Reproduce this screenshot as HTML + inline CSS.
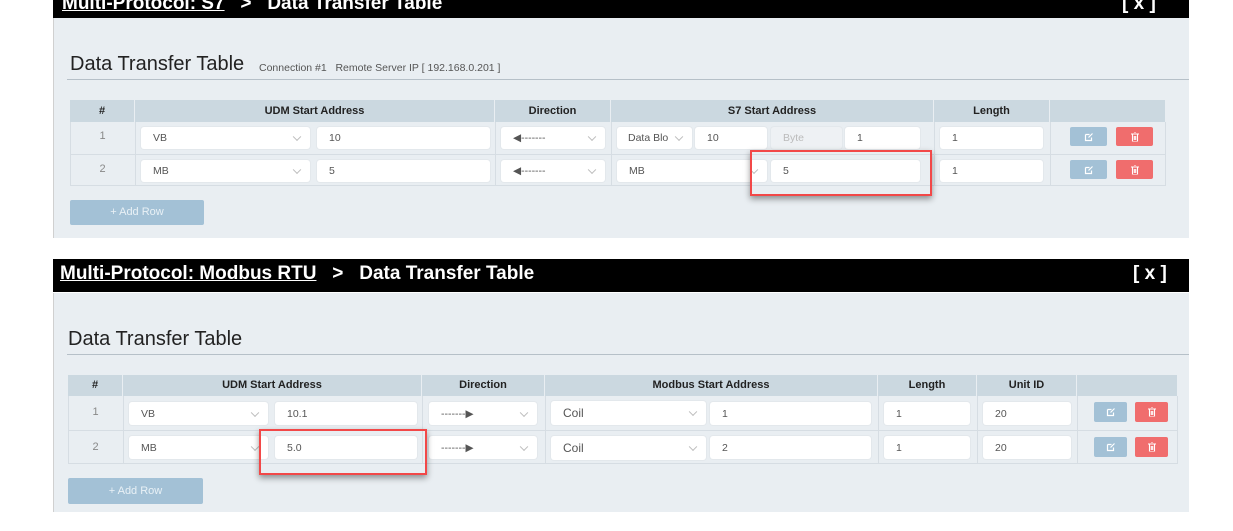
<!DOCTYPE html>
<html><head><meta charset="utf-8"><style>
*{box-sizing:border-box;margin:0;padding:0}
body{width:1233px;height:531px;background:#fff;position:relative;overflow:hidden;font-family:"Liberation Sans Narrow","Liberation Sans",sans-serif;color:#555}
.a{position:absolute}
.hdr{background:#000;color:#fff;font-weight:bold;font-size:19px;font-family:"Liberation Sans",sans-serif}
.body{background:#e9eef2;border-left:1px solid #d0d0d0}
.th{background:#cbd8e0;color:#222;font-weight:bold;font-size:11px;text-align:center;line-height:22px;border-right:1px solid #e9eef2}
.in{background:#fff;border-radius:3px;font-size:10.5px;color:#555;padding-left:12px;display:flex;align-items:center;box-shadow:0 0 0 1px #e3e8ec}
.sel::after{content:"";position:absolute;right:10px;top:50%;width:5px;height:5px;border-right:1px solid #bbb;border-bottom:1px solid #bbb;transform:translateY(-70%) rotate(45deg)}
.num{font-size:11px;color:#888;text-align:center}
.be{background:#a3c1d6;border-radius:2px}
.bd{background:#f06d6d;border-radius:2px}
.red{border:2px solid #f24848;box-shadow:0 3px 6px rgba(0,0,0,.4)}
.add{background:#a3c1d6;color:#e9f1f6;font-size:11px;text-align:center;border-radius:2px}
.ic{position:absolute;left:50%;top:50%;transform:translate(-50%,-50%)}
</style></head><body>

<!-- Panel 1 -->
<div class="a hdr" style="left:53px;top:0;width:1136px;height:18px"></div>
<div class="a" style="left:62px;top:-7px;color:#fff;font-weight:bold;font-size:19px;font-family:'Liberation Sans',sans-serif;white-space:nowrap"><span style="text-decoration:underline">Multi-Protocol: S7</span> &nbsp;&nbsp;&gt;&nbsp;&nbsp; Data Transfer Table</div>
<div class="a" style="left:1122px;top:-7px;color:#fff;font-weight:bold;font-size:19px;font-family:'Liberation Sans',sans-serif">[ x ]</div>
<div class="a body" style="left:53px;top:18px;width:1136px;height:220px"></div>
<div class="a" style="left:70px;top:53px;font-size:20px;color:#222;font-family:'Liberation Sans',sans-serif">Data Transfer Table</div>
<div class="a" style="left:259px;top:62px;font-size:10.5px;color:#555">Connection #1 &nbsp;&nbsp;Remote Server IP [ 192.168.0.201 ]</div>
<div class="a" style="left:67px;top:79px;width:1122px;height:1px;background:#b6c0c8"></div>

<div class="a th" style="left:70px;top:100px;width:65px;height:22px">#</div>
<div class="a th" style="left:135px;top:100px;width:360px;height:22px">UDM Start Address</div>
<div class="a th" style="left:495px;top:100px;width:116px;height:22px">Direction</div>
<div class="a th" style="left:611px;top:100px;width:323px;height:22px">S7 Start Address</div>
<div class="a th" style="left:934px;top:100px;width:116px;height:22px">Length</div>
<div class="a th" style="left:1050px;top:100px;width:116px;height:22px"></div>
<div class="a" style="left:70px;top:122px;width:1096px;height:64px;border:1px solid #d6dde3;border-top:none"></div>
<div class="a" style="left:70px;top:154px;width:1096px;height:1px;background:#d6dde3"></div>
<div class="a" style="left:135px;top:122px;width:1px;height:64px;background:#d6dde3"></div>
<div class="a" style="left:495px;top:122px;width:1px;height:64px;background:#d6dde3"></div>
<div class="a" style="left:611px;top:122px;width:1px;height:64px;background:#d6dde3"></div>
<div class="a" style="left:934px;top:122px;width:1px;height:64px;background:#d6dde3"></div>
<div class="a" style="left:1050px;top:122px;width:1px;height:64px;background:#d6dde3"></div>

<div class="a num" style="left:70px;top:130px;width:65px">1</div>
<div class="a num" style="left:70px;top:163px;width:65px">2</div>
<div class="a in sel" style="left:141px;top:127px;width:169px;height:22px">VB</div>
<div class="a in" style="left:317px;top:127px;width:173px;height:22px">10</div>
<div class="a in sel" style="left:501px;top:127px;width:104px;height:22px">◀-------</div>
<div class="a in sel" style="left:617px;top:127px;width:75px;height:22px;padding-left:11px;overflow:hidden">Data Blo</div>
<div class="a in" style="left:695px;top:127px;width:72px;height:22px">10</div>
<div class="a in" style="left:771px;top:127px;width:71px;height:22px;background:#eef1f4;color:#bbb">Byte</div>
<div class="a in" style="left:845px;top:127px;width:75px;height:22px">1</div>
<div class="a in" style="left:940px;top:127px;width:103px;height:22px">1</div>
<div class="a be" style="left:1070px;top:127px;width:37px;height:19px"><svg class="ic" width="9" height="9" viewBox="0 0 9 9"><path d="M1 2h4M1 2v6h6V5M4 5l4-4" stroke="#fff" stroke-width="1.2" fill="none"/></svg></div>
<div class="a bd" style="left:1116px;top:127px;width:37px;height:19px"><svg class="ic" width="8" height="9" viewBox="0 0 8 9"><path d="M0 1.5h8M3 0h2M1.5 2v7h5V2M3.3 3.5v4M4.7 3.5v4" stroke="#fff" stroke-width="1.1" fill="none"/></svg></div>

<div class="a in sel" style="left:141px;top:160px;width:169px;height:22px">MB</div>
<div class="a in" style="left:317px;top:160px;width:173px;height:22px">5</div>
<div class="a in sel" style="left:501px;top:160px;width:104px;height:22px">◀-------</div>
<div class="a in sel" style="left:617px;top:160px;width:150px;height:22px">MB</div>
<div class="a in" style="left:771px;top:160px;width:149px;height:22px">5</div>
<div class="a in" style="left:940px;top:160px;width:103px;height:22px">1</div>
<div class="a be" style="left:1070px;top:160px;width:37px;height:19px"><svg class="ic" width="9" height="9" viewBox="0 0 9 9"><path d="M1 2h4M1 2v6h6V5M4 5l4-4" stroke="#fff" stroke-width="1.2" fill="none"/></svg></div>
<div class="a bd" style="left:1116px;top:160px;width:37px;height:19px"><svg class="ic" width="8" height="9" viewBox="0 0 8 9"><path d="M0 1.5h8M3 0h2M1.5 2v7h5V2M3.3 3.5v4M4.7 3.5v4" stroke="#fff" stroke-width="1.1" fill="none"/></svg></div>
<div class="a red" style="left:750px;top:150px;width:182px;height:46px"></div>
<div class="a add" style="left:70px;top:200px;width:134px;height:25px;line-height:25px">+ Add Row</div>

<!-- Panel 2 -->
<div class="a hdr" style="left:53px;top:259px;width:1136px;height:33px"></div>
<div class="a" style="left:60px;top:263px;color:#fff;font-weight:bold;font-size:19px;font-family:'Liberation Sans',sans-serif;white-space:nowrap"><span style="text-decoration:underline">Multi-Protocol: Modbus RTU</span>&nbsp;&nbsp; &gt; &nbsp;&nbsp;Data Transfer Table</div>
<div class="a" style="left:1133px;top:263px;color:#fff;font-weight:bold;font-size:19px;font-family:'Liberation Sans',sans-serif">[ x ]</div>
<div class="a body" style="left:53px;top:293px;width:1136px;height:219px"></div>
<div class="a" style="left:68px;top:328px;font-size:20px;color:#222;font-family:'Liberation Sans',sans-serif">Data Transfer Table</div>
<div class="a" style="left:67px;top:354px;width:1122px;height:1px;background:#b6c0c8"></div>

<div class="a th" style="left:68px;top:375px;width:55px;height:21px;line-height:21px">#</div>
<div class="a th" style="left:123px;top:375px;width:299px;height:21px;line-height:21px">UDM Start Address</div>
<div class="a th" style="left:422px;top:375px;width:123px;height:21px;line-height:21px">Direction</div>
<div class="a th" style="left:545px;top:375px;width:333px;height:21px;line-height:21px">Modbus Start Address</div>
<div class="a th" style="left:878px;top:375px;width:99px;height:21px;line-height:21px">Length</div>
<div class="a th" style="left:977px;top:375px;width:100px;height:21px;line-height:21px">Unit ID</div>
<div class="a th" style="left:1077px;top:375px;width:101px;height:21px;line-height:21px"></div>
<div class="a" style="left:68px;top:396px;width:1110px;height:68px;border:1px solid #d6dde3;border-top:none"></div>
<div class="a" style="left:68px;top:430px;width:1110px;height:1px;background:#d6dde3"></div>
<div class="a" style="left:123px;top:396px;width:1px;height:68px;background:#d6dde3"></div>
<div class="a" style="left:422px;top:396px;width:1px;height:68px;background:#d6dde3"></div>
<div class="a" style="left:545px;top:396px;width:1px;height:68px;background:#d6dde3"></div>
<div class="a" style="left:878px;top:396px;width:1px;height:68px;background:#d6dde3"></div>
<div class="a" style="left:977px;top:396px;width:1px;height:68px;background:#d6dde3"></div>
<div class="a" style="left:1077px;top:396px;width:1px;height:68px;background:#d6dde3"></div>

<div class="a num" style="left:68px;top:406px;width:55px">1</div>
<div class="a num" style="left:68px;top:441px;width:55px">2</div>
<div class="a in sel" style="left:129px;top:402px;width:139px;height:23px">VB</div>
<div class="a in" style="left:275px;top:402px;width:142px;height:23px">10.1</div>
<div class="a in sel" style="left:429px;top:402px;width:108px;height:23px">-------▶</div>
<div class="a in sel" style="left:551px;top:401px;width:155px;height:24px;font-size:12px">Coil</div>
<div class="a in" style="left:710px;top:402px;width:161px;height:23px">1</div>
<div class="a in" style="left:884px;top:402px;width:86px;height:23px">1</div>
<div class="a in" style="left:983px;top:402px;width:88px;height:23px">20</div>
<div class="a be" style="left:1094px;top:402px;width:33px;height:20px"><svg class="ic" width="9" height="9" viewBox="0 0 9 9"><path d="M1 2h4M1 2v6h6V5M4 5l4-4" stroke="#fff" stroke-width="1.2" fill="none"/></svg></div>
<div class="a bd" style="left:1135px;top:402px;width:33px;height:20px"><svg class="ic" width="8" height="9" viewBox="0 0 8 9"><path d="M0 1.5h8M3 0h2M1.5 2v7h5V2M3.3 3.5v4M4.7 3.5v4" stroke="#fff" stroke-width="1.1" fill="none"/></svg></div>

<div class="a in sel" style="left:129px;top:436px;width:139px;height:23px">MB</div>
<div class="a in" style="left:275px;top:436px;width:142px;height:23px">5.0</div>
<div class="a in sel" style="left:429px;top:436px;width:108px;height:23px">-------▶</div>
<div class="a in sel" style="left:551px;top:436px;width:155px;height:24px;font-size:12px">Coil</div>
<div class="a in" style="left:710px;top:436px;width:161px;height:23px">2</div>
<div class="a in" style="left:884px;top:436px;width:86px;height:23px">1</div>
<div class="a in" style="left:983px;top:436px;width:88px;height:23px">20</div>
<div class="a be" style="left:1094px;top:437px;width:33px;height:20px"><svg class="ic" width="9" height="9" viewBox="0 0 9 9"><path d="M1 2h4M1 2v6h6V5M4 5l4-4" stroke="#fff" stroke-width="1.2" fill="none"/></svg></div>
<div class="a bd" style="left:1135px;top:437px;width:33px;height:20px"><svg class="ic" width="8" height="9" viewBox="0 0 8 9"><path d="M0 1.5h8M3 0h2M1.5 2v7h5V2M3.3 3.5v4M4.7 3.5v4" stroke="#fff" stroke-width="1.1" fill="none"/></svg></div>
<div class="a red" style="left:259px;top:429px;width:168px;height:46px"></div>
<div class="a add" style="left:68px;top:478px;width:135px;height:26px;line-height:26px">+ Add Row</div>
</body></html>
